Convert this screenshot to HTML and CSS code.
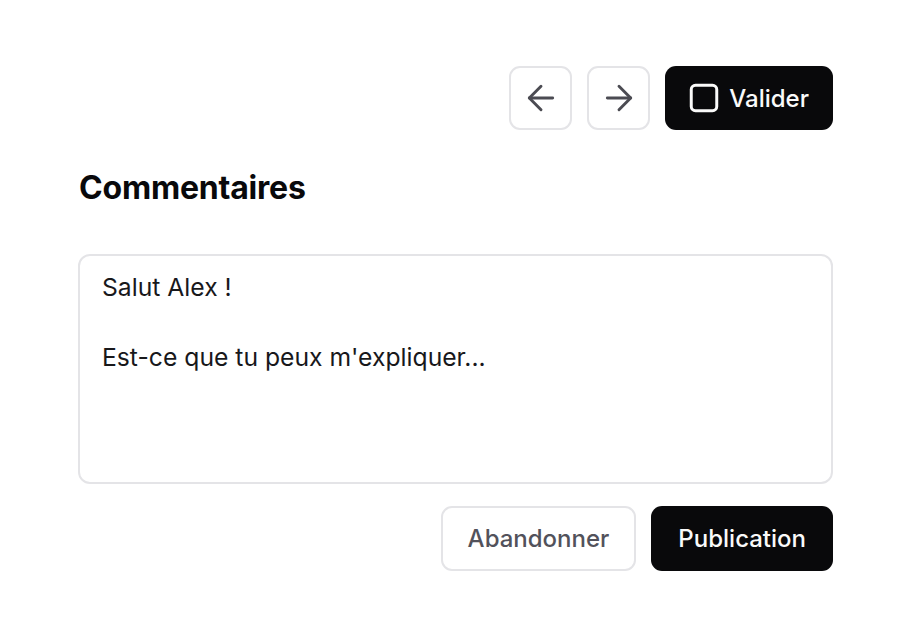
FILE: index.html
```html
<!DOCTYPE html>
<html lang="fr">
<head>
<meta charset="utf-8">
<link rel="stylesheet" href="styles.css">
</head>
<body>
<div class="page">
  <div class="toolbar">
    <button class="btn btn-icon" aria-label="Précédent">
      <svg viewBox="0 0 24 24" width="40" height="40" fill="none" stroke="currentColor" stroke-width="1.75" stroke-linecap="round" stroke-linejoin="round"><path d="M19 12H5"/><path d="M12 19l-7-7 7-7"/></svg>
    </button>
    <button class="btn btn-icon" aria-label="Suivant">
      <svg viewBox="0 0 24 24" width="40" height="40" fill="none" stroke="currentColor" stroke-width="1.75" stroke-linecap="round" stroke-linejoin="round"><path d="M5 12h14"/><path d="M12 5l7 7-7 7"/></svg>
    </button>
    <button class="btn btn-dark btn-validate">
      <svg viewBox="0 0 24 24" width="34" height="34" fill="none" stroke="currentColor" stroke-width="2.1" stroke-linecap="round" stroke-linejoin="round"><rect x="3" y="3" width="18" height="18" rx="3"/></svg>
      <span>Valider</span>
    </button>
  </div>

  <h2 class="title">Commentaires</h2>

  <div class="textarea">Salut Alex !<br><br>Est-ce que tu peux m'expliquer...</div>

  <div class="actions">
    <button class="btn btn-outline">Abandonner</button>
    <button class="btn btn-dark btn-publish">Publication</button>
  </div>
</div>
</body>
</html>
```

FILE: styles.css
```css
* { box-sizing: border-box; }
html, body { margin: 0; background: #ffffff; }
body {
  font-family: Inter, "Noto Sans", "Liberation Sans", sans-serif;
  color: #09090b;
}
.page {
  width: 833px;
  padding: 66px 0 0 78px;
}
.toolbar {
  display: flex;
  justify-content: flex-end;
  gap: 15px;
}
.btn {
  font-family: inherit;
  height: 64px;
  border-radius: 11px;
  display: inline-flex;
  align-items: center;
  justify-content: center;
  font-size: 24px;
  font-weight: 500;
  cursor: pointer;
}
.btn-icon {
  width: 63px;
  background: #fff;
  border: 2px solid #e4e4e7;
  color: #4b4b52;
  padding: 0;
}
.btn-dark {
  background: #09090b;
  color: #fafafa;
  border: none;
  padding: 0 25px;
}
.btn-validate {
  gap: 8px;
  padding: 0 24px 0 22px;
}
.title {
  margin: 38px 0 0 1px;
  font-size: 32px;
  font-weight: 700;
  letter-spacing: -0.2px;
  line-height: 40px;
}
.textarea {
  margin-top: 46px;
  height: 230px;
  border: 2px solid #e4e4e7;
  border-radius: 12px;
  padding: 14px 22px;
  font-size: 24.7px;
  line-height: 35px;
  color: #18181b;
}
.actions {
  display: flex;
  justify-content: flex-end;
  gap: 15px;
  margin-top: 22px;
}
.btn-outline {
  height: 65px;
  background: #fff;
  border: 2px solid #e4e4e7;
  color: #52525b;
  padding: 0 25px;
}
.btn-publish {
  height: 65px;
  padding: 0 27px;
}
```
